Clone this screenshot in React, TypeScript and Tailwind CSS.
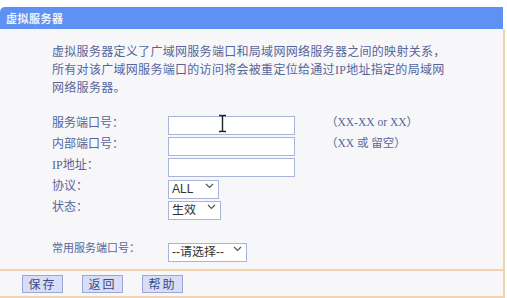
import React from 'react'

const textColor = 'text-[#56659a]'

function Chevron() {
  return (
    <svg
      width="9"
      height="6"
      viewBox="0 0 9 6"
      className="pointer-events-none absolute right-[5px] top-1/2 -translate-y-1/2"
    >
      <path d="M1 1 L4.5 4.5 L8 1" fill="none" stroke="#555" strokeWidth="1.2" />
    </svg>
  )
}

function Select({ value, width }: { value: string; width: string }) {
  return (
    <div className={`relative h-[19px] ${width}`}>
      <select
        defaultValue={value}
        className="h-full w-full appearance-none border border-[#a9b4da] bg-white pl-[3px] text-[12px] leading-none text-[#333] font-['Liberation_Sans','Noto_Sans_CJK_SC',sans-serif] outline-none"
      >
        <option>{value}</option>
      </select>
      <Chevron />
    </div>
  )
}

function TextInput({ cursor = false }: { cursor?: boolean }) {
  return (
    <div className="relative h-[19px] w-[127px]">
      <input className="h-full w-full border border-[#a9b4da] bg-white outline-none" />
      {cursor && (
        <svg
          width="9"
          height="19"
          viewBox="0 0 9 19"
          className="pointer-events-none absolute left-[50px] top-[1px]"
        >
          <path
            d="M1 1.5 H3.5 Q4.5 1.5 4.5 3 V16 Q4.5 17.5 3.5 17.5 H1 M8 1.5 H5.5 Q4.5 1.5 4.5 3 M4.5 16 Q4.5 17.5 5.5 17.5 H8"
            fill="none"
            stroke="#222"
            strokeWidth="1.4"
          />
        </svg>
      )}
    </div>
  )
}

function Row({
  label,
  children,
  hint,
}: {
  label: string
  children: React.ReactNode
  hint?: string
}) {
  return (
    <div className="flex h-[21px] items-center">
      <div className={`w-[116px] text-[12px] ${textColor}`}>{label}</div>
      {children}
      {hint && (
        <div className={`ml-[31px] text-[11.5px] ${textColor}`}>{hint}</div>
      )}
    </div>
  )
}

export default function App() {
  return (
    <div className="h-[298px] w-[507px] overflow-hidden bg-white pt-[7px] font-['Liberation_Serif','Noto_Sans_CJK_SC',serif]">
      {/* title bar */}
      <div className="flex h-[22px] w-[503px] items-center rounded-tl-[5px] bg-[#5e91f2] pl-[6px]">
        <span className="text-[11px] font-bold tracking-[0.5px] text-[#eef3ff] font-['Noto_Sans_CJK_SC',sans-serif]">
          虚拟服务器
        </span>
      </div>

      <div className="w-[505px] border-r-2 border-[#f4d2ad] bg-[#f7f7f9]">
        {/* body */}
        <div className="h-[240px] pl-[52px] pt-[14px]">
          <div
            className={`whitespace-nowrap text-[12px] leading-[18px] tracking-[0.3px] ${textColor}`}
          >
            <div>虚拟服务器定义了广域网服务端口和局域网网络服务器之间的映射关系，</div>
            <div>所有对该广域网服务端口的访问将会被重定位给通过IP地址指定的局域网</div>
            <div>网络服务器。</div>
          </div>

          <div className="mt-[15px] flex flex-col">
            <Row label="服务端口号：" hint="（XX-XX or XX）">
              <TextInput cursor />
            </Row>
            <Row label="内部端口号：" hint="（XX 或 留空）">
              <TextInput />
            </Row>
            <Row label="IP地址：">
              <TextInput />
            </Row>
            <Row label="协议：">
              <Select value="ALL" width="w-[51px]" />
            </Row>
            <Row label="状态：">
              <Select value="生效" width="w-[53px]" />
            </Row>
          </div>

          <div className="mt-[21px] flex h-[21px] items-center">
            <div className={`w-[116px] text-[11px] ${textColor}`}>常用服务端口号：</div>
            <Select value="--请选择--" width="w-[79px]" />
          </div>
        </div>

        {/* footer */}
        <div className="flex h-[29px] items-center gap-[19px] border-y-2 border-[#f4d2ad] pl-[22px]">
          {['保存', '返回', '帮助'].map((b) => (
            <button
              key={b}
              className="h-[18px] w-[41px] border border-[#9ba6d9] bg-[#d9def7] text-[12px] leading-none tracking-[2px] text-[#3b4a80] font-['Noto_Sans_CJK_SC',sans-serif]"
            >
              {b}
            </button>
          ))}
        </div>
      </div>
    </div>
  )
}
